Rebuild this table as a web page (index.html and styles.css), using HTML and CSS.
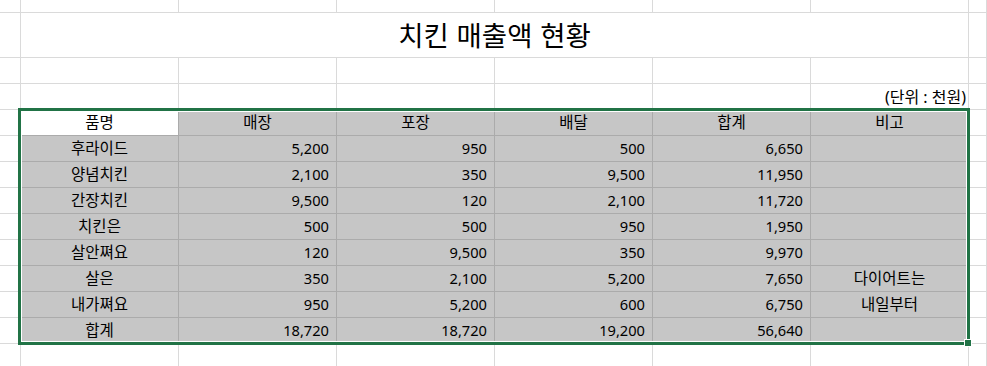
FILE: index.html
```html
<!DOCTYPE html>
<html lang="ko">
<head>
<meta charset="utf-8">
<title>치킨 매출액 현황</title>
<link rel="stylesheet" href="styles.css">
</head>
<body>
<div class="sheet">
  <!-- row 1 -->
  <div class="c"></div><div class="c"></div><div class="c"></div><div class="c"></div><div class="c"></div><div class="c"></div><div class="c"></div><div class="c"></div>
  <!-- row 2 -->
  <div class="c"></div><div class="c title">치킨 매출액 현황</div><div class="c"></div>
  <!-- row 3 -->
  <div class="c"></div><div class="c"></div><div class="c"></div><div class="c"></div><div class="c"></div><div class="c"></div><div class="c"></div><div class="c"></div>
  <!-- row 4 -->
  <div class="c"></div><div class="c"></div><div class="c"></div><div class="c"></div><div class="c"></div><div class="c"></div><div class="c unit">(단위 : 천원)</div><div class="c"></div>
  <!-- row 5 -->
  <div class="c"></div><div class="c t active">품명</div><div class="c t">매장</div><div class="c t">포장</div><div class="c t">배달</div><div class="c t">합계</div><div class="c t">비고</div><div class="c"></div>
  <!-- row 6 -->
  <div class="c"></div><div class="c t">후라이드</div><div class="c t n">5,200</div><div class="c t n">950</div><div class="c t n">500</div><div class="c t n">6,650</div><div class="c t"></div><div class="c"></div>
  <!-- row 7 -->
  <div class="c"></div><div class="c t">양념치킨</div><div class="c t n">2,100</div><div class="c t n">350</div><div class="c t n">9,500</div><div class="c t n">11,950</div><div class="c t"></div><div class="c"></div>
  <!-- row 8 -->
  <div class="c"></div><div class="c t">간장치킨</div><div class="c t n">9,500</div><div class="c t n">120</div><div class="c t n">2,100</div><div class="c t n">11,720</div><div class="c t"></div><div class="c"></div>
  <!-- row 9 -->
  <div class="c"></div><div class="c t">치킨은</div><div class="c t n">500</div><div class="c t n">500</div><div class="c t n">950</div><div class="c t n">1,950</div><div class="c t"></div><div class="c"></div>
  <!-- row 10 -->
  <div class="c"></div><div class="c t">살안쪄요</div><div class="c t n">120</div><div class="c t n">9,500</div><div class="c t n">350</div><div class="c t n">9,970</div><div class="c t"></div><div class="c"></div>
  <!-- row 11 -->
  <div class="c"></div><div class="c t">살은</div><div class="c t n">350</div><div class="c t n">2,100</div><div class="c t n">5,200</div><div class="c t n">7,650</div><div class="c t">다이어트는</div><div class="c"></div>
  <!-- row 12 -->
  <div class="c"></div><div class="c t">내가쪄요</div><div class="c t n">950</div><div class="c t n">5,200</div><div class="c t n">600</div><div class="c t n">6,750</div><div class="c t">내일부터</div><div class="c"></div>
  <!-- row 13 -->
  <div class="c"></div><div class="c t">합계</div><div class="c t n">18,720</div><div class="c t n">18,720</div><div class="c t n">19,200</div><div class="c t n">56,640</div><div class="c t"></div><div class="c"></div>
  <!-- row 14 -->
  <div class="c"></div><div class="c"></div><div class="c"></div><div class="c"></div><div class="c"></div><div class="c"></div><div class="c"></div><div class="c"></div>

  <div class="sel"><div class="handle"></div></div>
</div>
</body>
</html>
```

FILE: styles.css
```css
html, body {
  margin: 0;
  padding: 0;
  background: #ffffff;
  overflow: hidden;
}

body {
  font-family: "Noto Sans", "Noto Sans CJK KR", sans-serif;
  font-size: 15.5px;
  color: #000000;
}

.sheet {
  position: relative;
  display: grid;
  grid-template-columns: 21px repeat(6, 158px) 1fr;
  grid-template-rows: 13px 45px repeat(12, 26px);
  width: 987px;
  height: 366px;
  overflow: hidden;
}

.c {
  box-sizing: border-box;
  border-right: 1px solid #dadada;
  border-bottom: 1px solid #dadada;
  display: flex;
  align-items: center;
  justify-content: center;
  white-space: nowrap;
  line-height: 1;
  overflow: hidden;
}

.t {
  background: #c6c6c6;
  border-right-color: #ababab;
  border-bottom-color: #ababab;
}

.t.active {
  background: #ffffff;
}

.n {
  justify-content: flex-end;
  padding-right: 7px;
  font-size: 14.67px;
}

.title {
  grid-column: 2 / 8;
  font-family: "Noto Sans CJK KR", sans-serif;
  font-size: 27.5px;
}

.unit {
  justify-content: flex-end;
  padding-right: 2px;
  font-size: 16px;
}

.sel {
  position: absolute;
  grid-column: 2 / 8;
  grid-row: 5 / 14;
  top: -2px;
  left: -3px;
  right: -1px;
  bottom: -1px;
  border: 3px solid #217346;
  box-shadow: inset 0 0 0 1px #ffffff;
  pointer-events: none;
}

.handle {
  position: absolute;
  right: -5px;
  bottom: -5px;
  width: 6px;
  height: 6px;
  background: #217346;
  border: 1px solid #ffffff;
}
```
